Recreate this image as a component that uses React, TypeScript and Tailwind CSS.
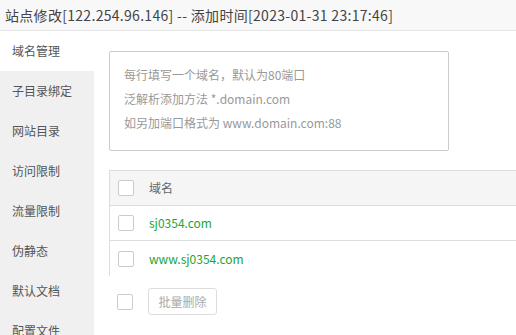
import React from "react";

const font = { fontFamily: '"Noto Sans CJK SC", sans-serif' };

const menu = ["域名管理", "子目录绑定", "网站目录", "访问限制", "流量限制", "伪静态", "默认文档", "配置文件"];
const domains = ["sj0354.com", "www.sj0354.com"];

function Check() {
  return <span className="block h-4 w-4 shrink-0 rounded-[2px] border border-[#ccc] bg-white" />;
}

export default function App() {
  return (
    <div className="h-[335px] w-[516px] overflow-hidden bg-white text-[#333]" style={font}>
      {/* title bar */}
      <div className="flex h-[31px] items-center border-b border-[#e5e5e5] bg-[#f8f8f8] pl-[5px] text-[14px] tracking-[0.3px] text-[#444]">
        站点修改[122.254.96.146] -- 添加时间[2023-01-31 23:17:46]
      </div>

      <div className="flex">
        {/* side menu */}
        <div className="w-[94px] shrink-0 bg-[#f0f0f0]">
          {menu.map((m, i) => (
            <div
              key={m}
              className={`flex h-10 items-center pl-3 text-[12px] text-[#555] ${i === 0 ? "bg-white" : ""}`}
            >
              {m}
            </div>
          ))}
        </div>

        {/* content */}
        <div className="flex-1 pl-[15px] pt-5">
          <div className="flex h-[100px] w-[340px] flex-col rounded-[2px] border border-[#ccc] px-[14px] pt-[11px] text-[12px] leading-6 text-[#999]">
            <span>每行填写一个域名，默认为80端口</span>
            <span>泛解析添加方法 *.domain.com</span>
            <span>如另加端口格式为 www.domain.com:88</span>
          </div>

          <div className="mt-[19px] border-l border-t border-[#ddd]">
            <div className="flex h-[35px] items-center gap-[15px] border-b border-[#ddd] bg-[#f5f5f5] pl-2 text-[12px] text-[#666]">
              <Check />
              <span>域名</span>
            </div>
            {domains.map((d, i) => (
              <div
                key={d}
                className={`flex h-[35px] items-center gap-[15px] pl-2 text-[12px] text-[#20a53a] ${i === 0 ? "border-b border-[#ddd]" : ""}`}
              >
                <Check />
                <span>{d}</span>
              </div>
            ))}
          </div>

          <div className="mt-3 flex items-center gap-[15px] pl-2">
            <Check />
            <button className="h-[27px] w-[69px] rounded-[3px] border border-[#ddd] bg-white text-[12px] text-[#aaa]">
              批量删除
            </button>
          </div>
        </div>
      </div>
    </div>
  );
}
